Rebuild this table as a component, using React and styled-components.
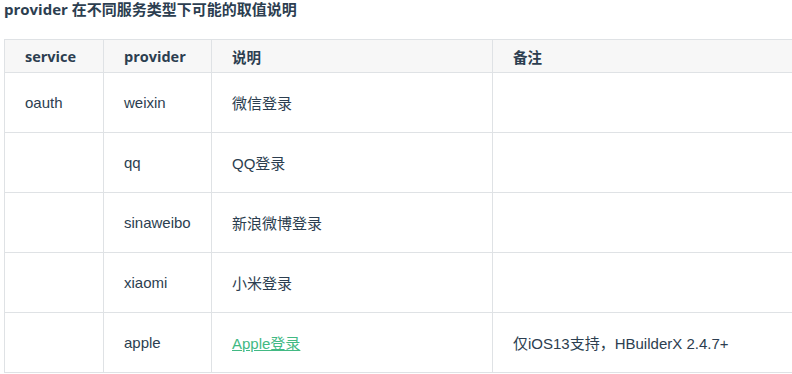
import React from "react";
import styled, { createGlobalStyle } from "styled-components";

const GlobalStyle = createGlobalStyle`
  body {
    margin: 0;
    overflow: hidden;
    background: #fff;
    color: #2c3e50;
    font-family: "Liberation Sans", Arial, "Noto Sans CJK SC", sans-serif;
  }
`;

const rows = [
  { service: "oauth", provider: "weixin", desc: "微信登录", note: "" },
  { service: "", provider: "qq", desc: "QQ登录", note: "" },
  { service: "", provider: "sinaweibo", desc: "新浪微博登录", note: "" },
  { service: "", provider: "xiaomi", desc: "小米登录", note: "" },
  {
    service: "",
    provider: "apple",
    desc: "Apple登录",
    link: true,
    note: "仅iOS13支持，HBuilderX 2.4.7+",
  },
];

export default function App() {
  return (
    <Page>
      <GlobalStyle />
      <Title>provider 在不同服务类型下可能的取值说明</Title>
      <Table>
        <colgroup>
          <col style={{ width: 99 }} />
          <col style={{ width: 108 }} />
          <col style={{ width: 281 }} />
          <col style={{ width: 320 }} />
        </colgroup>
        <thead>
          <tr>
            <Th>service</Th>
            <Th>provider</Th>
            <Th>说明</Th>
            <Th>备注</Th>
          </tr>
        </thead>
        <tbody>
          {rows.map((r) => (
            <tr key={r.provider}>
              <Td>{r.service}</Td>
              <Td>{r.provider}</Td>
              <Td>{r.link ? <DocLink href="#">{r.desc}</DocLink> : r.desc}</Td>
              <Td>{r.note}</Td>
            </tr>
          ))}
        </tbody>
      </Table>
    </Page>
  );
}

const Page = styled.div`
  padding: 0 0 0 4px;
`;

// section heading above the table
const Title = styled.h4`
  margin: 0;
  height: 39px;
  line-height: 19px;
  font-size: 15px;
  font-weight: bold;
  font-family: "Open Sans", "Noto Sans CJK SC", sans-serif;
  color: #2c3e50;
`;

const Table = styled.table`
  border-collapse: collapse;
  table-layout: fixed;
  width: 808px;
`;

const Th = styled.th`
  height: 33px;
  padding: 0 20px;
  background: #f7f7f7;
  border: 1px solid #dfe2e5;
  text-align: left;
  font-family: "Open Sans", "Noto Sans CJK SC", sans-serif;
  font-size: 14.5px;
  font-weight: bold;
  box-sizing: border-box;
`;

const Td = styled.td`
  height: 60px;
  padding: 0 20px;
  border: 1px solid #dfe2e5;
  font-size: 15px;
  box-sizing: border-box;
  white-space: nowrap;
`;

const DocLink = styled.a`
  color: #42b983;
  text-decoration: underline;
`;
